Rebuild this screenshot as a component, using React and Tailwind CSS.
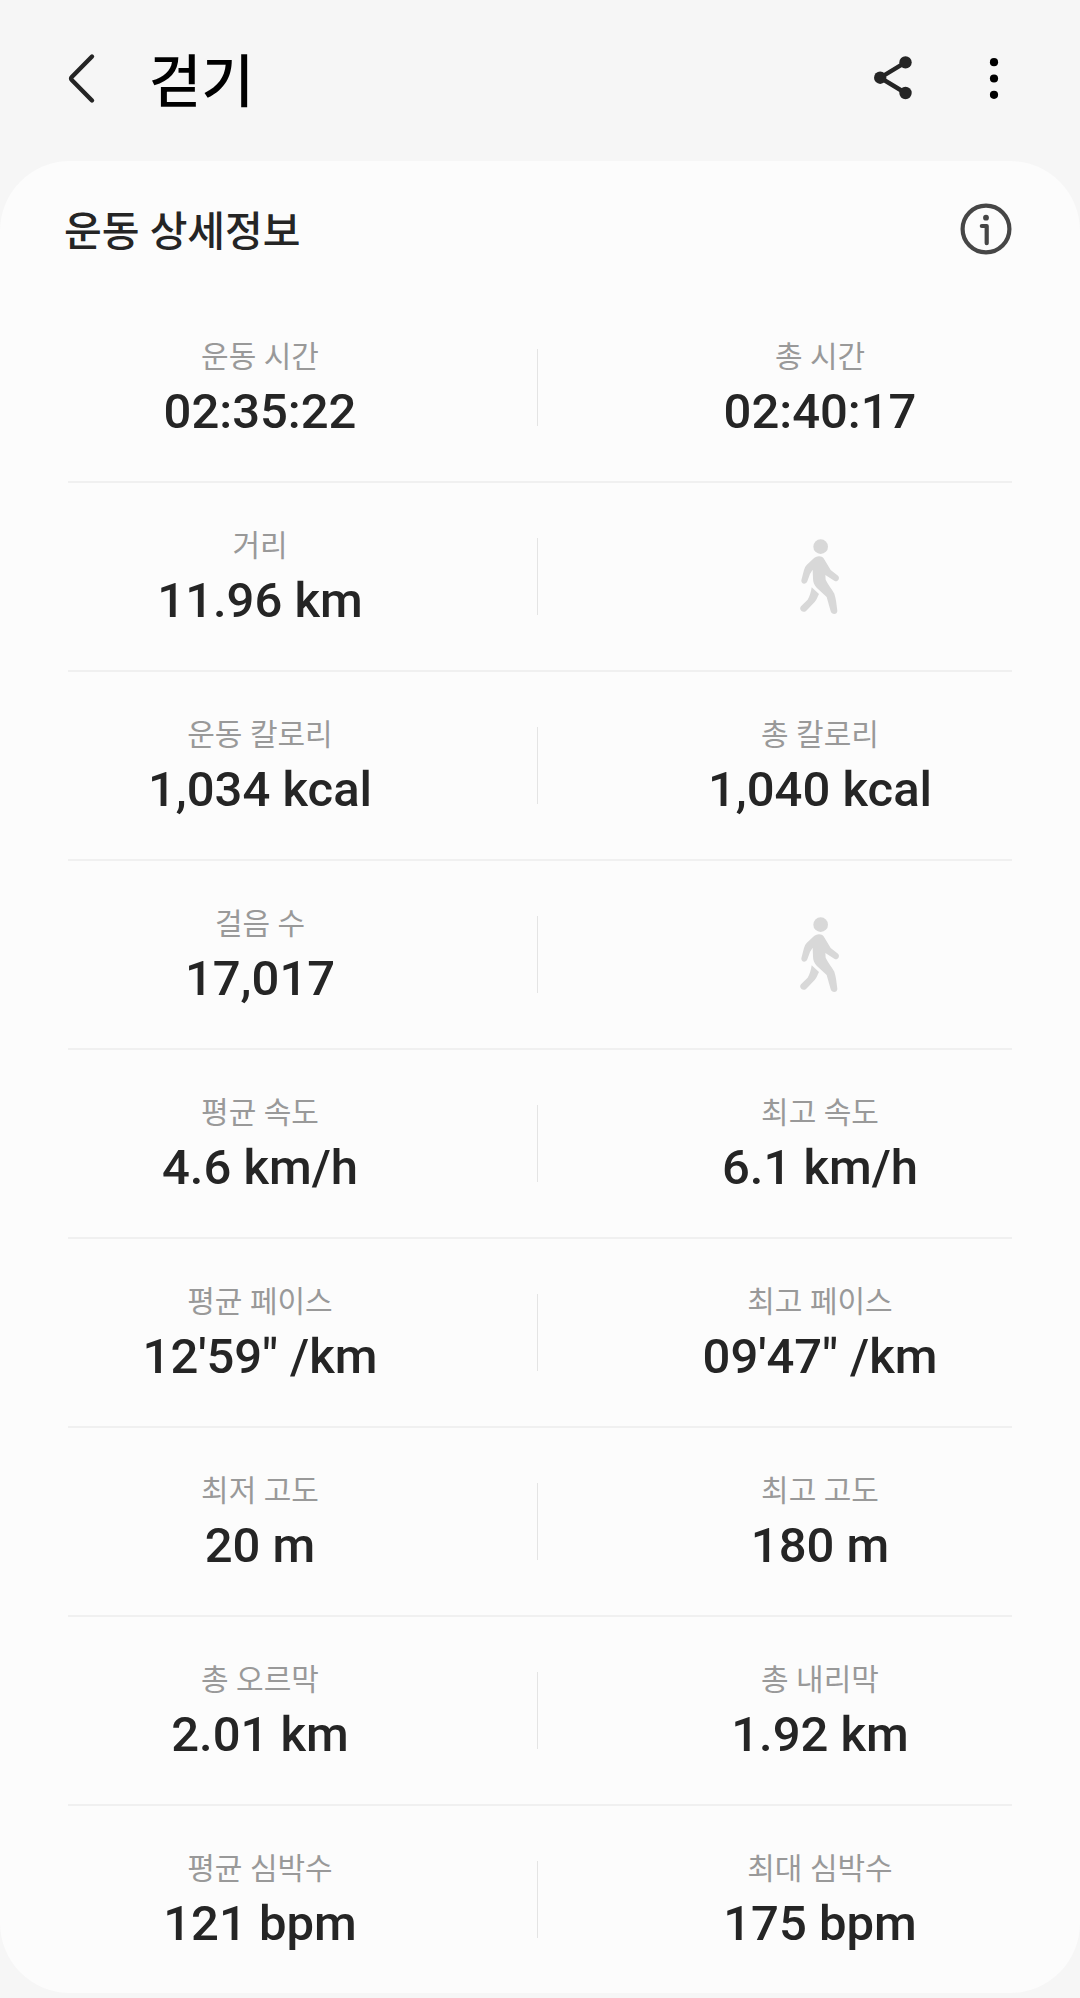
import React from 'react';

const rows = [
    [{ label: '운동 시간', value: '02:35:22' }, { label: '총 시간', value: '02:40:17' }],
    [{ label: '거리', value: '11.96 km' }, null],
    [{ label: '운동 칼로리', value: '1,034 kcal' }, { label: '총 칼로리', value: '1,040 kcal' }],
    [{ label: '걸음 수', value: '17,017' }, null],
    [{ label: '평균 속도', value: '4.6 km/h' }, { label: '최고 속도', value: '6.1 km/h' }],
    [{ label: '평균 페이스', value: '12\'59" /km' }, { label: '최고 페이스', value: '09\'47" /km' }],
    [{ label: '최저 고도', value: '20 m' }, { label: '최고 고도', value: '180 m' }],
    [{ label: '총 오르막', value: '2.01 km' }, { label: '총 내리막', value: '1.92 km' }],
    [{ label: '평균 심박수', value: '121 bpm' }, { label: '최대 심박수', value: '175 bpm' }],
];

function BackIcon() {
    return (
        <svg viewBox="0 0 32 56" className="w-8 h-14" fill="none" stroke="#252525" strokeWidth="4.4" strokeLinecap="round" strokeLinejoin="round" aria-hidden="true">
            <path d="M26 5.500 L5.800 26 Q4.500 27.500 5.800 29 L26 49.500" />
        </svg>
    );
}

function ShareIcon() {
    return (
        <svg viewBox="0 0 48 48" className="w-12 h-12" fill="#252525" aria-hidden="true">
            <path d="M36.500 7.400 L11.200 22.700 L36.500 38" fill="none" stroke="#252525" strokeWidth="4.400" />
            <circle cx="11.200" cy="22.700" r="6.200" />
            <circle cx="36.500" cy="7.400" r="6.200" />
            <circle cx="36.500" cy="38" r="6.200" />
        </svg>
    );
}

function MoreIcon() {
    return (
        <svg viewBox="0 0 48 48" className="w-12 h-12" fill="#000" aria-hidden="true">
            <circle cx="24" cy="7.200" r="4.100" />
            <circle cx="24" cy="23.500" r="4.100" />
            <circle cx="24" cy="39.800" r="4.100" />
        </svg>
    );
}

function InfoIcon() {
    return (
        <svg viewBox="0 0 52 52" className="w-[52px] h-[52px]" fill="none" stroke="#464646" strokeLinecap="round" strokeLinejoin="round" aria-hidden="true">
            <circle cx="26" cy="26" r="23.400" strokeWidth="4.200" />
            <circle cx="26" cy="14.700" r="2.900" fill="#464646" stroke="none" />
            <path d="M21.800 23 H26.700 V40.200" strokeWidth="4.200" />
        </svg>
    );
}

function WalkIcon() {
    return (
        <svg viewBox="0 0 141 240" className="w-[47px] h-20" fill="#d8d8d8" aria-hidden="true">
            <circle cx="71" cy="29" r="22" />
            <path d="M66 58 C59 58 54 61 48 66 L29 84 Q23 90 21 99 L13 130 C12 143 28 143 31 133 L39 111 L47 98 L48 124 C48 136 51 143 59 152 L89 180 L101 223 C105 235 122 232 121 221 C119 205 117 184 112 170 C106 158 92 142 86 128 L85 114 L113 132 C121 136 131 124 123 116 L101 99 L83 69 C79 61 74 58 66 58 Z" />
            <path d="M44 151 L66 171 C61 181 59 189 53 195 L28 221 C17 231 4 217 12 208 L32 188 C38 178 42 165 44 151 Z" />
        </svg>
    );
}

function Stat({ item }) {
    if (!item) {
        return (
            <div className="flex justify-center">
                <WalkIcon />
            </div>
        );
    }
    return (
        <div className="pt-1 text-center whitespace-nowrap">
            <dt className="text-[30px] leading-[42px] text-[#999999]">{item.label}</dt>
            <dd className="mt-0.5 text-[49px] leading-[64px] font-medium text-[#252525]">{item.value}</dd>
        </div>
    );
}

export default function App() {
    return (
        <div className="min-h-screen bg-[#f6f6f6] pb-[5px] font-[Roboto,'Noto_Sans_CJK_KR',sans-serif]">
            <header className="flex items-center justify-between h-[161px] pl-[66px] pr-[62px] pb-1">
                <div className="flex items-center gap-[51px]">
                    <button type="button" aria-label="뒤로">
                        <BackIcon />
                    </button>
                    <h1 className="pt-2 text-[57px] leading-[72px] font-medium text-black">걷기</h1>
                </div>
                <div className="flex items-center gap-[53px]">
                    <button type="button" aria-label="공유">
                        <ShareIcon />
                    </button>
                    <button type="button" aria-label="더보기">
                        <MoreIcon />
                    </button>
                </div>
            </header>

            <main className="bg-[#fcfcfc] rounded-[70px] px-[68px]">
                <div className="flex items-center justify-between h-[133px] pt-0.5 -ml-1">
                    <h2 className="pt-1.5 text-[41px] leading-[56px] font-medium text-[#252525]">운동 상세정보</h2>
                    <button type="button" aria-label="정보">
                        <InfoIcon />
                    </button>
                </div>
                <dl>
                    {rows.map(([left, right], i) => (
                        <div key={i} className="border-b-2 border-[#f0f0f0] last:border-b-0">
                            <div className="grid grid-cols-[1fr_auto_1fr] items-center h-[187px]">
                                <Stat item={left} />
                                <div className="w-px h-[77px] ml-[85px] mr-[90px] bg-[#e4e4e4]" />
                                <Stat item={right} />
                            </div>
                        </div>
                    ))}
                </dl>
            </main>
        </div>
    );
}
